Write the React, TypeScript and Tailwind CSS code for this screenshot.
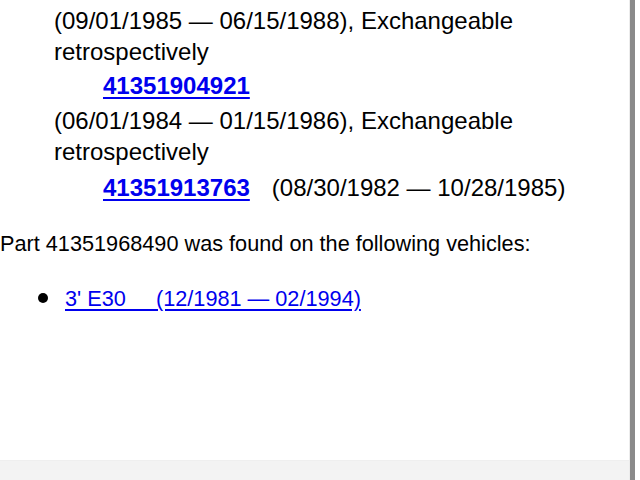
import React from 'react';

const linkCls = 'text-[#0000ee] underline decoration-[#0000ee] underline-offset-[3px]';

export default function App() {
  return (
    <div className="w-[640px] h-[480px] bg-white flex overflow-hidden font-['Liberation_Sans',Arial,sans-serif] text-black">
      <div className="flex-1 flex flex-col border-r border-[#ececec]">
        <div className="flex-1">
          {/* alternative parts */}
          <div className="pl-[54px] pt-[5px] text-[24px] leading-[31px]">
            <div>(09/01/1985 — 06/15/1988), Exchangeable</div>
            <div>retrospectively</div>
            <div className="pl-[49px] mt-[3px] mb-[4px]">
              <a href="#" className={`${linkCls} font-bold`}>41351904921</a>
            </div>
            <div>(06/01/1984 — 01/15/1986), Exchangeable</div>
            <div>retrospectively</div>
            <div className="pl-[49px] mt-[5px]">
              <a href="#" className={`${linkCls} font-bold`}>41351913763</a>
              <span className="ml-[22px]">(08/30/1982 — 10/28/1985)</span>
            </div>
          </div>

          <p className="mt-[25px] text-[21.7px] leading-[31px]">
            Part 41351968490 was found on the following vehicles:
          </p>

          <ul className="mt-[24px] pl-[65px] text-[21.7px] leading-[31px]">
            <li className="relative">
              <span className="absolute left-[-27px] top-[10px] w-[10px] h-[10px] rounded-full bg-black" />
              <a href="#" className={`${linkCls} whitespace-pre`}>3' E30     (12/1981 — 02/1994)</a>
            </li>
          </ul>
        </div>
        <div className="h-[20px] bg-[#f3f3f3] border-t border-[#efefef]" />
      </div>
      <div className="w-[5px] bg-[#8a8a8a]" />
      <div className="w-[5px] bg-white" />
    </div>
  );
}
